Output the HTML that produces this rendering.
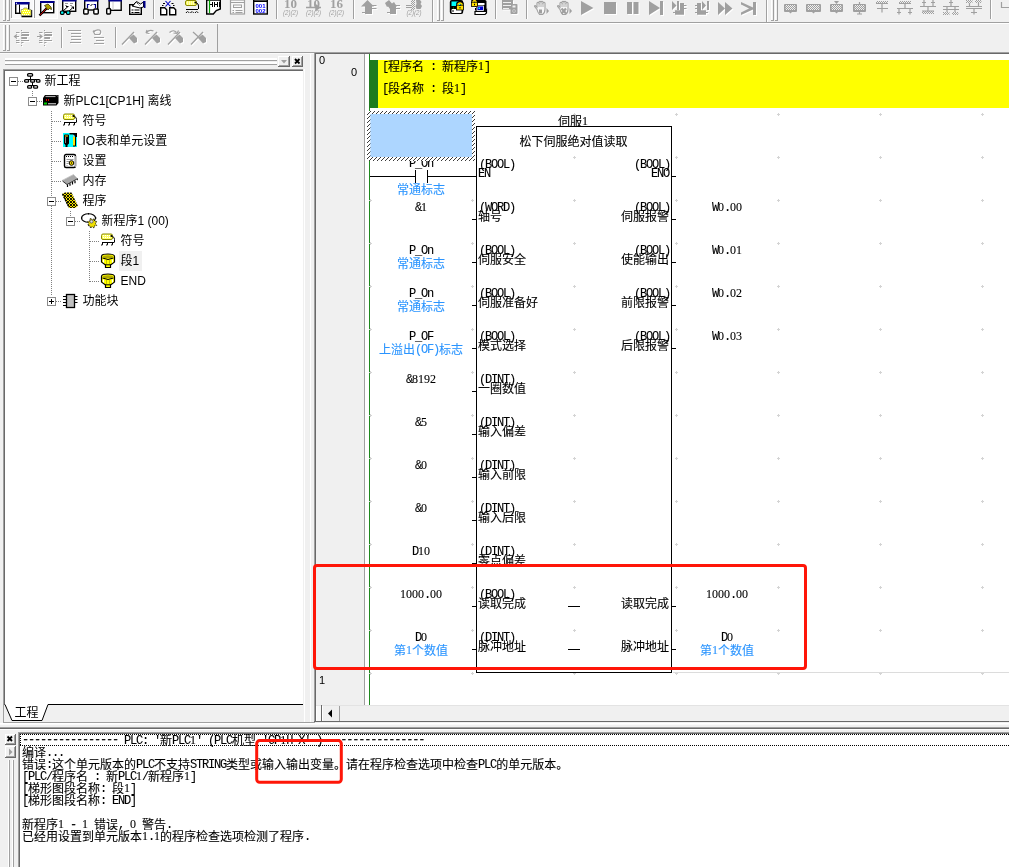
<!DOCTYPE html>
<html lang="zh-CN"><head><meta charset="utf-8"><title>CX-Programmer</title>
<style>
html,body{margin:0;padding:0}
body{width:1009px;height:867px;background:#f0f0f0;position:relative;overflow:hidden;
 font-family:"Liberation Sans","Noto Sans CJK SC",sans-serif;font-size:12px;color:#000}
.a{position:absolute;white-space:pre}
.s{font-family:"Liberation Mono","Noto Sans CJK SC",monospace;font-size:12px;line-height:12px;-webkit-text-stroke:0.1px currentColor}
.s .m{letter-spacing:-1.2px}
.x .m,.x .d{position:relative;top:-1px}
.x .h{top:-2px}
.s .d{font-family:"Liberation Serif",serif;line-height:0}
.t{font-family:"Liberation Sans","Noto Sans CJK SC",sans-serif;font-size:12px;line-height:16px}
svg{position:absolute;left:0;top:0}
#app{position:absolute;left:0;top:0;width:1009px;height:867px;will-change:transform}
</style></head>
<body>
<div id="app">
<div class="a" style="left:0px;top:22px;width:1009px;height:1px;background:#a0a0a0;"></div>
<div class="a" style="left:0px;top:23px;width:1009px;height:1px;background:#ffffff;"></div>
<div class="a" style="left:0px;top:52px;width:1009px;height:1px;background:#a0a0a0;"></div>
<div class="a" style="left:3px;top:0px;width:1px;height:20px;background:#ffffff;"></div>
<div class="a" style="left:4px;top:0px;width:1px;height:20px;background:#f0f0f0;"></div>
<div class="a" style="left:5px;top:0px;width:1px;height:20px;background:#a0a0a0;"></div>
<div class="a" style="left:3px;top:20px;width:3px;height:1px;background:#a0a0a0;"></div>
<div class="a" style="left:7px;top:0px;width:1px;height:20px;background:#ffffff;"></div>
<div class="a" style="left:8px;top:0px;width:1px;height:20px;background:#f0f0f0;"></div>
<div class="a" style="left:9px;top:0px;width:1px;height:20px;background:#a0a0a0;"></div>
<div class="a" style="left:7px;top:20px;width:3px;height:1px;background:#a0a0a0;"></div>
<div class="a" style="left:3px;top:25px;width:1px;height:25px;background:#ffffff;"></div>
<div class="a" style="left:4px;top:25px;width:1px;height:25px;background:#f0f0f0;"></div>
<div class="a" style="left:5px;top:25px;width:1px;height:25px;background:#a0a0a0;"></div>
<div class="a" style="left:3px;top:50px;width:3px;height:1px;background:#a0a0a0;"></div>
<div class="a" style="left:7px;top:25px;width:1px;height:25px;background:#ffffff;"></div>
<div class="a" style="left:8px;top:25px;width:1px;height:25px;background:#f0f0f0;"></div>
<div class="a" style="left:9px;top:25px;width:1px;height:25px;background:#a0a0a0;"></div>
<div class="a" style="left:7px;top:50px;width:3px;height:1px;background:#a0a0a0;"></div>
<div class="a" style="left:437px;top:0px;width:1px;height:20px;background:#ffffff;"></div>
<div class="a" style="left:438px;top:0px;width:1px;height:20px;background:#f0f0f0;"></div>
<div class="a" style="left:439px;top:0px;width:1px;height:20px;background:#a0a0a0;"></div>
<div class="a" style="left:437px;top:20px;width:3px;height:1px;background:#a0a0a0;"></div>
<div class="a" style="left:441px;top:0px;width:1px;height:20px;background:#ffffff;"></div>
<div class="a" style="left:442px;top:0px;width:1px;height:20px;background:#f0f0f0;"></div>
<div class="a" style="left:443px;top:0px;width:1px;height:20px;background:#a0a0a0;"></div>
<div class="a" style="left:441px;top:20px;width:3px;height:1px;background:#a0a0a0;"></div>
<div class="a" style="left:771px;top:0px;width:1px;height:20px;background:#ffffff;"></div>
<div class="a" style="left:772px;top:0px;width:1px;height:20px;background:#f0f0f0;"></div>
<div class="a" style="left:773px;top:0px;width:1px;height:20px;background:#a0a0a0;"></div>
<div class="a" style="left:771px;top:20px;width:3px;height:1px;background:#a0a0a0;"></div>
<div class="a" style="left:775px;top:0px;width:1px;height:20px;background:#ffffff;"></div>
<div class="a" style="left:776px;top:0px;width:1px;height:20px;background:#f0f0f0;"></div>
<div class="a" style="left:777px;top:0px;width:1px;height:20px;background:#a0a0a0;"></div>
<div class="a" style="left:775px;top:20px;width:3px;height:1px;background:#a0a0a0;"></div>
<div class="a" style="left:153px;top:0px;width:1px;height:19px;background:#a0a0a0;"></div>
<div class="a" style="left:154px;top:0px;width:1px;height:19px;background:#ffffff;"></div>
<div class="a" style="left:276px;top:0px;width:1px;height:19px;background:#a0a0a0;"></div>
<div class="a" style="left:277px;top:0px;width:1px;height:19px;background:#ffffff;"></div>
<div class="a" style="left:353px;top:0px;width:1px;height:19px;background:#a0a0a0;"></div>
<div class="a" style="left:354px;top:0px;width:1px;height:19px;background:#ffffff;"></div>
<div class="a" style="left:495px;top:0px;width:1px;height:19px;background:#a0a0a0;"></div>
<div class="a" style="left:496px;top:0px;width:1px;height:19px;background:#ffffff;"></div>
<div class="a" style="left:526px;top:0px;width:1px;height:19px;background:#a0a0a0;"></div>
<div class="a" style="left:527px;top:0px;width:1px;height:19px;background:#ffffff;"></div>
<div class="a" style="left:990px;top:0px;width:1px;height:19px;background:#a0a0a0;"></div>
<div class="a" style="left:991px;top:0px;width:1px;height:19px;background:#ffffff;"></div>
<div class="a" style="left:432px;top:0px;width:1px;height:22px;background:#a0a0a0;"></div>
<div class="a" style="left:433px;top:0px;width:1px;height:22px;background:#ffffff;"></div>
<div class="a" style="left:766px;top:0px;width:1px;height:22px;background:#a0a0a0;"></div>
<div class="a" style="left:767px;top:0px;width:1px;height:22px;background:#ffffff;"></div>
<div class="a" style="left:61px;top:27px;width:1px;height:21px;background:#a0a0a0;"></div>
<div class="a" style="left:62px;top:27px;width:1px;height:21px;background:#ffffff;"></div>
<div class="a" style="left:115px;top:27px;width:1px;height:21px;background:#a0a0a0;"></div>
<div class="a" style="left:116px;top:27px;width:1px;height:21px;background:#ffffff;"></div>
<div class="a" style="left:217px;top:24px;width:1px;height:28px;background:#a0a0a0;"></div>
<div class="a" style="left:12px;top:0px;width:21px;height:18px;background:#f9f9f9;"></div>
<div class="a" style="left:35px;top:0px;width:22px;height:18px;background:#f9f9f9;"></div>
<div class="a" style="left:11px;top:0px;width:1px;height:18px;background:#a0a0a0;"></div>
<div class="a" style="left:34px;top:0px;width:1px;height:18px;background:#a0a0a0;"></div>
<div class="a" style="left:33px;top:0px;width:1px;height:18px;background:#ffffff;"></div>
<div class="a" style="left:57px;top:0px;width:1px;height:18px;background:#ffffff;"></div>
<div class="a" style="left:11px;top:18px;width:47px;height:1px;background:#ffffff;"></div>
<div class="a" style="left:0px;top:53px;width:314px;height:1px;background:#fafafa;"></div>
<div class="a" style="left:5px;top:58px;width:272px;height:1px;background:#ffffff;"></div>
<div class="a" style="left:5px;top:59px;width:272px;height:1px;background:#ffffff;"></div>
<div class="a" style="left:5px;top:60px;width:272px;height:1px;background:#a0a0a0;"></div>
<div class="a" style="left:5px;top:62px;width:272px;height:1px;background:#ffffff;"></div>
<div class="a" style="left:5px;top:63px;width:272px;height:1px;background:#ffffff;"></div>
<div class="a" style="left:5px;top:64px;width:272px;height:1px;background:#a0a0a0;"></div>
<div class="a" style="left:278px;top:56px;width:12px;height:11px;background:#f0f0f0;"></div>
<div class="a" style="left:278px;top:56px;width:12px;height:1px;background:#ffffff;"></div>
<div class="a" style="left:278px;top:56px;width:1px;height:11px;background:#ffffff;"></div>
<div class="a" style="left:278px;top:66px;width:12px;height:1px;background:#696969;"></div>
<div class="a" style="left:289px;top:56px;width:1px;height:11px;background:#696969;"></div>
<div class="a" style="left:279px;top:65px;width:10px;height:1px;background:#a0a0a0;"></div>
<div class="a" style="left:288px;top:57px;width:1px;height:9px;background:#a0a0a0;"></div>
<div class="a" style="left:292px;top:56px;width:11px;height:11px;background:#f0f0f0;"></div>
<div class="a" style="left:292px;top:56px;width:11px;height:1px;background:#ffffff;"></div>
<div class="a" style="left:292px;top:56px;width:1px;height:11px;background:#ffffff;"></div>
<div class="a" style="left:292px;top:66px;width:11px;height:1px;background:#696969;"></div>
<div class="a" style="left:302px;top:56px;width:1px;height:11px;background:#696969;"></div>
<div class="a" style="left:293px;top:65px;width:9px;height:1px;background:#a0a0a0;"></div>
<div class="a" style="left:301px;top:57px;width:1px;height:9px;background:#a0a0a0;"></div>
<div class="a" style="left:4px;top:69px;width:299px;height:636px;background:#ffffff;"></div>
<div class="a" style="left:3px;top:69px;width:300px;height:1px;background:#a0a0a0;"></div>
<div class="a" style="left:4px;top:70px;width:299px;height:1px;background:#696969;"></div>
<div class="a" style="left:3px;top:69px;width:1px;height:653px;background:#a0a0a0;"></div>
<div class="a" style="left:4px;top:70px;width:1px;height:635px;background:#696969;"></div>
<div class="a" style="left:304px;top:69px;width:1px;height:653px;background:#ffffff;"></div>
<div class="a" style="left:310px;top:54px;width:1px;height:668px;background:#ffffff;"></div>
<div class="a" style="left:5px;top:705px;width:298px;height:17px;background:#f0f0f0;"></div>
<div class="a" style="left:316px;top:54px;width:693px;height:651px;background:#ffffff;"></div>
<div class="a" style="left:315px;top:53px;width:694px;height:1px;background:#696969;"></div>
<div class="a" style="left:314px;top:53px;width:1px;height:669px;background:#a0a0a0;"></div>
<div class="a" style="left:315px;top:54px;width:1px;height:667px;background:#696969;"></div>
<div class="a" style="left:316px;top:54px;width:48px;height:651px;background:#f0f0f0;"></div>
<div class="a" style="left:364px;top:54px;width:1px;height:651px;background:#a0a0a0;"></div>
<div class="a" style="left:369px;top:54px;width:1px;height:651px;background:#1e8a1e;"></div>
<div class="a" style="left:316px;top:705px;width:693px;height:16px;background:#f0f0f0;"></div>
<div class="a" style="left:316px;top:705px;width:693px;height:1px;background:#e3e3e3;"></div>
<div class="a" style="left:314px;top:721px;width:695px;height:1px;background:#696969;"></div>
<div class="a" style="left:0px;top:722px;width:1009px;height:1px;background:#f0f0f0;"></div>
<div class="a" style="left:3px;top:722px;width:312px;height:1px;background:#a0a0a0;"></div>
<div class="a" style="left:0px;top:723px;width:1009px;height:1px;background:#ffffff;"></div>
<div class="a" style="left:0px;top:724px;width:1009px;height:1px;background:#fafafa;"></div>
<div class="a" style="left:0px;top:727px;width:1009px;height:1px;background:#a0a0a0;"></div>
<div class="a" style="left:0px;top:728px;width:1009px;height:1px;background:#696969;"></div>
<div class="a" style="left:0px;top:729px;width:1009px;height:1px;background:#ffffff;"></div>
<div class="a" style="left:119px;top:251px;width:23px;height:20px;background:#f0f0f0;"></div>
<div class="a t" style="top:73px;left:44.5px;">新工程</div>
<div class="a t" style="top:93px;left:63.5px;">新PLC1[CP1H] 离线</div>
<div class="a t" style="top:113px;left:82.5px;">符号</div>
<div class="a t" style="top:133px;left:82.5px;">IO表和单元设置</div>
<div class="a t" style="top:153px;left:82.5px;">设置</div>
<div class="a t" style="top:173px;left:82.5px;">内存</div>
<div class="a t" style="top:193px;left:82.5px;">程序</div>
<div class="a t" style="top:213px;left:101.5px;">新程序1 (00)</div>
<div class="a t" style="top:233px;left:120.5px;">符号</div>
<div class="a t" style="top:253px;left:120.5px;">段1</div>
<div class="a t" style="top:273px;left:120.5px;">END</div>
<div class="a t" style="top:293px;left:82.5px;">功能块</div>
<svg width="320" height="20" style="left:0;top:703px"><path d="M5 1.500l7 16h30l6-16z" fill="#fff"/></svg>
<div class="a t" style="top:705px;left:14.5px;">工程</div>
<svg width="639" height="563" style="left:369px;top:113px"><defs><pattern id="gd" width="102" height="43" patternUnits="userSpaceOnUse"><path d="M0 1.5h3M1.5 0v3" stroke="#d4d4d4" stroke-width="1" fill="none"/></pattern></defs><rect width="639" height="563" fill="url(#gd)"/></svg>
<div class="a t" style="top:52px;left:319px;font-size:11px;">0</div>
<div class="a t" style="top:64px;left:351px;font-size:11px;">0</div>
<div class="a t" style="top:672px;left:319px;font-size:11px;">1</div>
<div class="a" style="left:369px;top:60px;width:9px;height:48px;background:#1e7b1e;"></div>
<div class="a" style="left:378px;top:60px;width:631px;height:48px;background:#ffff00;"></div>
<div class="a s x" style="top:62px;left:382px;"><span class="m">[</span>程序名<span class="m"> : </span>新程序<span class="d">1</span><span class="m">]</span></div>
<div class="a s x" style="top:84px;left:382px;"><span class="m">[</span>段名称<span class="m"> : </span>段<span class="d">1</span><span class="m">]</span></div>
<div class="a" style="left:673px;top:672px;width:336px;height:1px;background:#dcdcdc;"></div>
<div class="a" style="left:476px;top:126px;width:196px;height:547px;background:transparent;box-sizing:border-box;border:1px solid #000;"></div>
<div class="a s x" style="top:117px;left:373px;width:400px;text-align:center;">伺服<span class="d">1</span></div>
<div class="a s" style="top:137px;left:373.5px;width:400px;text-align:center;">松下伺服绝对值读取</div>
<div class="a s" style="top:158px;left:221px;width:400px;text-align:center;"><span class="m">P_On</span></div>
<div class="a s" style="top:185px;left:221px;width:400px;text-align:center;color:#2b95ff;">常通标志</div>
<div class="a s" style="top:159px;left:479px;"><span class="m">(BOOL)</span></div>
<div class="a s" style="top:168px;left:478px;"><span class="m">EN</span></div>
<div class="a" style="left:472px;top:176px;width:4px;height:1px;background:#000;"></div>
<div class="a s" style="top:159px;left:270px;width:400px;text-align:right;"><span class="m">(BOOL)</span></div>
<div class="a s" style="top:168px;left:269px;width:400px;text-align:right;"><span class="m">ENO</span></div>
<div class="a" style="left:672px;top:176px;width:4px;height:1px;background:#000;"></div>
<div class="a s" style="top:202px;left:221px;width:400px;text-align:center;"><span class="m">&amp;</span><span class="d">1</span></div>
<div class="a s" style="top:202px;left:479px;"><span class="m">(WORD)</span></div>
<div class="a s" style="top:212px;left:478px;">轴号</div>
<div class="a" style="left:472px;top:219px;width:4px;height:1px;background:#000;"></div>
<div class="a s" style="top:202px;left:270px;width:400px;text-align:right;"><span class="m">(BOOL)</span></div>
<div class="a s" style="top:212px;left:269px;width:400px;text-align:right;">伺服报警</div>
<div class="a" style="left:672px;top:219px;width:4px;height:1px;background:#000;"></div>
<div class="a s" style="top:202px;left:527px;width:400px;text-align:center;"><span class="m">W</span><span class="d">0</span><span class="m">.</span><span class="d">00</span></div>
<div class="a s" style="top:245px;left:221px;width:400px;text-align:center;"><span class="m">P_On</span></div>
<div class="a s" style="top:259px;left:221px;width:400px;text-align:center;color:#2b95ff;">常通标志</div>
<div class="a s" style="top:245px;left:479px;"><span class="m">(BOOL)</span></div>
<div class="a s" style="top:255px;left:478px;">伺服安全</div>
<div class="a" style="left:472px;top:262px;width:4px;height:1px;background:#000;"></div>
<div class="a s" style="top:245px;left:270px;width:400px;text-align:right;"><span class="m">(BOOL)</span></div>
<div class="a s" style="top:255px;left:269px;width:400px;text-align:right;">使能输出</div>
<div class="a" style="left:672px;top:262px;width:4px;height:1px;background:#000;"></div>
<div class="a s" style="top:245px;left:527px;width:400px;text-align:center;"><span class="m">W</span><span class="d">0</span><span class="m">.</span><span class="d">01</span></div>
<div class="a s" style="top:288px;left:221px;width:400px;text-align:center;"><span class="m">P_On</span></div>
<div class="a s" style="top:302px;left:221px;width:400px;text-align:center;color:#2b95ff;">常通标志</div>
<div class="a s" style="top:288px;left:479px;"><span class="m">(BOOL)</span></div>
<div class="a s" style="top:298px;left:478px;">伺服准备好</div>
<div class="a" style="left:472px;top:305px;width:4px;height:1px;background:#000;"></div>
<div class="a s" style="top:288px;left:270px;width:400px;text-align:right;"><span class="m">(BOOL)</span></div>
<div class="a s" style="top:298px;left:269px;width:400px;text-align:right;">前限报警</div>
<div class="a" style="left:672px;top:305px;width:4px;height:1px;background:#000;"></div>
<div class="a s" style="top:288px;left:527px;width:400px;text-align:center;"><span class="m">W</span><span class="d">0</span><span class="m">.</span><span class="d">02</span></div>
<div class="a s" style="top:331px;left:221px;width:400px;text-align:center;"><span class="m">P_OF</span></div>
<div class="a s x" style="top:345px;left:221px;width:400px;text-align:center;color:#2b95ff;">上溢出<span class="m">(OF)</span>标志</div>
<div class="a s" style="top:331px;left:479px;"><span class="m">(BOOL)</span></div>
<div class="a s" style="top:341px;left:478px;">模式选择</div>
<div class="a" style="left:472px;top:348px;width:4px;height:1px;background:#000;"></div>
<div class="a s" style="top:331px;left:270px;width:400px;text-align:right;"><span class="m">(BOOL)</span></div>
<div class="a s" style="top:341px;left:269px;width:400px;text-align:right;">后限报警</div>
<div class="a" style="left:672px;top:348px;width:4px;height:1px;background:#000;"></div>
<div class="a s" style="top:331px;left:527px;width:400px;text-align:center;"><span class="m">W</span><span class="d">0</span><span class="m">.</span><span class="d">03</span></div>
<div class="a s" style="top:374px;left:221px;width:400px;text-align:center;"><span class="m">&amp;</span><span class="d">8192</span></div>
<div class="a s" style="top:374px;left:479px;"><span class="m">(DINT)</span></div>
<div class="a s" style="top:384px;left:478px;">一圈数值</div>
<div class="a" style="left:472px;top:391px;width:4px;height:1px;background:#000;"></div>
<div class="a s" style="top:417px;left:221px;width:400px;text-align:center;"><span class="m">&amp;</span><span class="d">5</span></div>
<div class="a s" style="top:417px;left:479px;"><span class="m">(DINT)</span></div>
<div class="a s" style="top:427px;left:478px;">输入偏差</div>
<div class="a" style="left:472px;top:434px;width:4px;height:1px;background:#000;"></div>
<div class="a s" style="top:460px;left:221px;width:400px;text-align:center;"><span class="m">&amp;</span><span class="d">0</span></div>
<div class="a s" style="top:460px;left:479px;"><span class="m">(DINT)</span></div>
<div class="a s" style="top:470px;left:478px;">输入前限</div>
<div class="a" style="left:472px;top:477px;width:4px;height:1px;background:#000;"></div>
<div class="a s" style="top:503px;left:221px;width:400px;text-align:center;"><span class="m">&amp;</span><span class="d">0</span></div>
<div class="a s" style="top:503px;left:479px;"><span class="m">(DINT)</span></div>
<div class="a s" style="top:513px;left:478px;">输入后限</div>
<div class="a" style="left:472px;top:520px;width:4px;height:1px;background:#000;"></div>
<div class="a s" style="top:546px;left:221px;width:400px;text-align:center;"><span class="m">D</span><span class="d">10</span></div>
<div class="a s" style="top:546px;left:479px;"><span class="m">(DINT)</span></div>
<div class="a s" style="top:556px;left:478px;">零点偏差</div>
<div class="a" style="left:472px;top:563px;width:4px;height:1px;background:#000;"></div>
<div class="a s" style="top:589px;left:221px;width:400px;text-align:center;"><span class="d">1000</span><span class="m">.</span><span class="d">00</span></div>
<div class="a s" style="top:589px;left:479px;"><span class="m">(BOOL)</span></div>
<div class="a s" style="top:599px;left:478px;">读取完成</div>
<div class="a" style="left:472px;top:606px;width:4px;height:1px;background:#000;"></div>
<div class="a s" style="top:599px;left:269px;width:400px;text-align:right;">读取完成</div>
<div class="a" style="left:672px;top:606px;width:4px;height:1px;background:#000;"></div>
<div class="a s" style="top:589px;left:527px;width:400px;text-align:center;"><span class="d">1000</span><span class="m">.</span><span class="d">00</span></div>
<div class="a" style="left:568px;top:606px;width:12px;height:1px;background:#000;"></div>
<div class="a s" style="top:632px;left:221px;width:400px;text-align:center;"><span class="m">D</span><span class="d">0</span></div>
<div class="a s x" style="top:646px;left:221px;width:400px;text-align:center;color:#2b95ff;">第<span class="d">1</span>个数值</div>
<div class="a s" style="top:632px;left:479px;"><span class="m">(DINT)</span></div>
<div class="a s" style="top:642px;left:478px;">脉冲地址</div>
<div class="a" style="left:472px;top:649px;width:4px;height:1px;background:#000;"></div>
<div class="a s" style="top:642px;left:269px;width:400px;text-align:right;">脉冲地址</div>
<div class="a" style="left:672px;top:649px;width:4px;height:1px;background:#000;"></div>
<div class="a s" style="top:632px;left:527px;width:400px;text-align:center;"><span class="m">D</span><span class="d">0</span></div>
<div class="a s x" style="top:646px;left:527px;width:400px;text-align:center;color:#2b95ff;">第<span class="d">1</span>个数值</div>
<div class="a" style="left:568px;top:649px;width:12px;height:1px;background:#000;"></div>
<div class="a" style="left:370px;top:176px;width:45px;height:1px;background:#000;"></div>
<div class="a" style="left:428px;top:176px;width:48px;height:1px;background:#000;"></div>
<div class="a" style="left:415px;top:170px;width:1px;height:13px;background:#000;"></div>
<div class="a" style="left:427px;top:170px;width:1px;height:13px;background:#000;"></div>
<svg width="108" height="50" style="left:367px;top:111px"><defs><pattern id="ht" width="4" height="4" patternUnits="userSpaceOnUse"><path d="M-1 5l6-6M-1 1l2-2M3 5l2-2" stroke="#222" stroke-width="0.9" fill="none"/></pattern></defs><rect width="109" height="50" fill="#fff"/><rect width="109" height="50" fill="url(#ht)"/><rect x="3.400" y="3" width="101.600" height="43" fill="#add6ff"/></svg>
<div class="a" style="left:316px;top:706px;width:1px;height:15px;background:#fff;"></div>
<div class="a" style="left:317px;top:706px;width:4px;height:15px;background:#f8f8f8;"></div>
<div class="a" style="left:321px;top:705px;width:1px;height:16px;background:#696969;"></div>
<div class="a" style="left:322px;top:706px;width:1px;height:15px;background:#fff;"></div>
<div class="a" style="left:339px;top:706px;width:1px;height:15px;background:#a0a0a0;"></div>
<div class="a" style="left:20px;top:734px;width:989px;height:133px;background:#ffffff;"></div>
<div class="a" style="left:18px;top:732px;width:991px;height:1px;background:#a0a0a0;"></div>
<div class="a" style="left:19px;top:733px;width:990px;height:1px;background:#696969;"></div>
<div class="a" style="left:18px;top:732px;width:1px;height:135px;background:#a0a0a0;"></div>
<div class="a" style="left:19px;top:733px;width:1px;height:134px;background:#696969;"></div>
<div class="a" style="left:5px;top:734px;width:11px;height:11px;background:#f0f0f0;"></div>
<div class="a" style="left:5px;top:734px;width:11px;height:1px;background:#ffffff;"></div>
<div class="a" style="left:5px;top:734px;width:1px;height:11px;background:#ffffff;"></div>
<div class="a" style="left:5px;top:744px;width:11px;height:1px;background:#696969;"></div>
<div class="a" style="left:15px;top:734px;width:1px;height:11px;background:#696969;"></div>
<div class="a" style="left:6px;top:743px;width:9px;height:1px;background:#a0a0a0;"></div>
<div class="a" style="left:14px;top:735px;width:1px;height:9px;background:#a0a0a0;"></div>
<div class="a" style="left:5px;top:746px;width:11px;height:12px;background:#f0f0f0;"></div>
<div class="a" style="left:5px;top:746px;width:11px;height:1px;background:#ffffff;"></div>
<div class="a" style="left:5px;top:746px;width:1px;height:12px;background:#ffffff;"></div>
<div class="a" style="left:5px;top:757px;width:11px;height:1px;background:#696969;"></div>
<div class="a" style="left:15px;top:746px;width:1px;height:12px;background:#696969;"></div>
<div class="a" style="left:6px;top:756px;width:9px;height:1px;background:#a0a0a0;"></div>
<div class="a" style="left:14px;top:747px;width:1px;height:10px;background:#a0a0a0;"></div>
<div class="a" style="left:8px;top:760px;width:1px;height:107px;background:#ffffff;"></div>
<div class="a" style="left:9px;top:760px;width:1px;height:107px;background:#a0a0a0;"></div>
<div class="a" style="left:12px;top:760px;width:1px;height:107px;background:#ffffff;"></div>
<div class="a" style="left:13px;top:760px;width:1px;height:107px;background:#a0a0a0;"></div>
<div class="a s x" style="top:736px;left:22px;"><span class="m h">----------------</span><span class="m"> PLC: &#x27;</span>新<span class="m">PLC</span><span class="d">1</span><span class="m">&#x27; (PLC</span>机型<span class="m"> &#x27;CP</span><span class="d">1</span><span class="m">H-X&#x27; ) </span><span class="m h">----------------</span></div>
<div class="a s x" style="top:748px;left:22px;">编译<span class="m">...</span></div>
<div class="a s x" style="top:760px;left:22px;">错误<span class="m">:</span>这个单元版本的<span class="m">PLC</span>不支持<span class="m">STRING</span>类型或输入输出变量。请在程序检查选项中检查<span class="m">PLC</span>的单元版本。</div>
<div class="a s x" style="top:772px;left:22px;"><span class="m">[PLC/</span>程序名<span class="m"> : </span>新<span class="m">PLC</span><span class="d">1</span><span class="m">/</span>新程序<span class="d">1</span><span class="m">]</span></div>
<div class="a s x" style="top:784px;left:22px;"><span class="m">[</span>梯形图段名称<span class="m">: </span>段<span class="d">1</span><span class="m">]</span></div>
<div class="a s x" style="top:796px;left:22px;"><span class="m">[</span>梯形图段名称<span class="m">: END]</span></div>
<div class="a s x" style="top:820px;left:22px;">新程序<span class="d">1</span><span class="m"> - </span><span class="d">1</span><span class="m"> </span>错误<span class="m">, </span><span class="d">0</span><span class="m"> </span>警告<span class="m">.</span></div>
<div class="a s x" style="top:832px;left:22px;">已经用设置到单元版本<span class="d">1</span><span class="m">.</span><span class="d">1</span>的程序检查选项检测了程序<span class="m">.</span></div>
<svg width="1009" height="867" viewBox="0 0 1009 867">
<g transform="translate(24,73)" fill="#fff" stroke="#000" stroke-width="1.3"><path d="M6.5 3v3M2.5 6.5h12M2.5 6.5v1M8.5 6.5v1M14.5 6.5v1M8.5 9v3M5 12.5h7M5 12.5v1M11.5 12.5v1" fill="none" stroke-width="1"/><rect x="3.6" y="0.6" width="5" height="2.6" rx="1.2"/><rect x="0.6" y="6.6" width="4" height="2.6" rx="1.2"/><rect x="6.6" y="6.6" width="4" height="2.6" rx="1.2"/><rect x="12.4" y="6.6" width="3.6" height="2.6" rx="1.2"/><rect x="3.6" y="12.6" width="4" height="2.6" rx="1.2"/><rect x="9.6" y="12.6" width="4" height="2.6" rx="1.2"/></g>
<rect x="9.5" y="77.5" width="8" height="8" fill="#fff" stroke="#8c8c8c" stroke-width="1"/>
<path d="M11 81.5h5" stroke="#000" stroke-width="1"/>
<path d="M18 81.5H23" stroke="#808080" stroke-width="1" stroke-dasharray="1 1" fill="none"/>
<g transform="translate(43,93)"><path d="M0 5l2-3h13.5v8l-2 2.5H0z" fill="#000"/><path d="M2.5 3.5h10" stroke="#a8a8a8" stroke-width="1.2"/><path d="M14 2.6l.8.8" stroke="#ddd" stroke-width="1"/><rect x="3" y="6" width="1" height="2" fill="#e00000"/><rect x="5" y="6" width="1" height="2" fill="#e00000"/><rect x="1" y="9.5" width="3" height="2" fill="#00d000"/><rect x="5" y="10" width="8" height="1.4" fill="#a8a8a8"/></g>
<rect x="28.5" y="97.5" width="8" height="8" fill="#fff" stroke="#8c8c8c" stroke-width="1"/>
<path d="M30 101.5h5" stroke="#000" stroke-width="1"/>
<path d="M37 101.5H42" stroke="#808080" stroke-width="1" stroke-dasharray="1 1" fill="none"/>
<g transform="translate(62,113)"><rect x="1.5" y="1" width="11" height="5.5" rx="1.5" fill="#ffff66" stroke="#8a8a00" stroke-width="1"/><path d="M3 2.5h8M3 4.5h8" stroke="#fff" stroke-width="1" stroke-dasharray="1 1"/><circle cx="11.5" cy="3" r="1.1" fill="#000"/><path d="M12.5 3.5q2 .5 2 3v3M2 9.5h12M2.5 9.5v2M7.5 9.5v2M12.5 9.5v2" fill="none" stroke="#000" stroke-width="1"/><path d="M1.5 12.5l1-1.5M6.5 12.5l1-1.5M11.5 12.5l1-1.5" stroke="#000" stroke-width="1.2"/></g>
<path d="M52 121.5H61" stroke="#808080" stroke-width="1" stroke-dasharray="1 1" fill="none"/>
<g transform="translate(62,133)"><rect x="1" y="0" width="14" height="14" fill="#00ffff"/><path d="M2 2.5q0-1 1-1h3q1 0 1 1v8l-1.5 1.5v2h-2v-2L2 10.5z" fill="#000"/><path d="M3 3h3" stroke="#ffe000" stroke-width="1"/><path d="M3.5 4v6" stroke="#888" stroke-width="1"/><path d="M7.5 0h7.5v4h-2V2.5h-1.5V1.500h-4z" fill="#000"/><rect x="11" y="2" width="1" height="2" fill="#bbb"/><rect x="11" y="4" width="2" height="9" fill="#ffe000"/><path d="M13.5 4v9" stroke="#000" stroke-width="1"/><path d="M11 13h2.500" stroke="#000" stroke-width="1"/></g>
<path d="M52 141.5H61" stroke="#808080" stroke-width="1" stroke-dasharray="1 1" fill="none"/>
<g transform="translate(62,153)"><rect x="2.500" y="1.500" width="11" height="13" rx="1.500" fill="#fff" stroke="#000" stroke-width="1.400"/><path d="M4 3.500h8" stroke="#000" stroke-width="1" stroke-dasharray="1 1"/><path d="M4.500 6.500h7M4.500 8.500h2.500M4.500 10.500h2M4.500 12.500h1" stroke="#999" stroke-width="1"/><path d="M13.500 3v11" stroke="#aaa" stroke-width="1"/><circle cx="9.500" cy="10" r="2.300" fill="#ffe000" stroke="#000" stroke-width="1"/><circle cx="9.500" cy="10" r=".7" fill="#000"/></g>
<path d="M52 161.5H61" stroke="#808080" stroke-width="1" stroke-dasharray="1 1" fill="none"/>
<g transform="translate(62,173)"><path d="M0 7.500L11.500 1.500 15.500 5.500 5 11.500z" fill="#a8a8a8"/><path d="M0 7.500L11.500 1.500 15.500 5.500" fill="none" stroke="#c8c8c8" stroke-width=".8"/><path d="M0.500 8l4.500 3.500L15.500 5.700v1.500" fill="none" stroke="#333" stroke-width="1"/><path d="M5.500 11.500v2.500M8 10.300v2.500M10.500 9v2.500M13 7.700v2.500" stroke="#000" stroke-width="1.200"/></g>
<path d="M52 181.5H61" stroke="#808080" stroke-width="1" stroke-dasharray="1 1" fill="none"/>
<g transform="translate(62,193)"><defs><pattern id="pp" width="3" height="3" patternUnits="userSpaceOnUse"><rect width="3" height="3" fill="#f0e000"/><path d="M0 0l3 3M3 0l-3 3" stroke="#000" stroke-width=".9"/></pattern></defs><path d="M0 1l3-1.500h6.500L16 13l-3 2H7z" fill="url(#pp)"/><path d="M0.500 1L7 14.500" stroke="#000" stroke-width="1.200" stroke-dasharray="2 1"/></g>
<rect x="47.5" y="197.5" width="8" height="8" fill="#fff" stroke="#8c8c8c" stroke-width="1"/>
<path d="M49 201.5h5" stroke="#000" stroke-width="1"/>
<path d="M56 201.5H61" stroke="#808080" stroke-width="1" stroke-dasharray="1 1" fill="none"/>
<g transform="translate(81,213)"><ellipse cx="7.500" cy="5" rx="7" ry="4.300" fill="#fff" stroke="#000" stroke-width="1.100"/><path d="M7.500 0v1.500M0 5h1.500M14 5h1.500" stroke="#000" stroke-width="1"/><path d="M10 5.500l1.200 1.500 2-1.300.3 2.300 2.200.500-1.200 2 1.200 2-2.200.300-.5 2.200-1.800-1.300-1.700 1.300-.6-2.200-2.200-.3 1.100-2-1.100-2 2.200-.5.300-2.300z" fill="#f0e000" stroke="#000" stroke-width=".9" stroke-dasharray="1.500 1"/><circle cx="10.500" cy="8.500" r="1.600" fill="#ddd" stroke="#555" stroke-width=".8"/></g>
<rect x="66.5" y="217.5" width="8" height="8" fill="#fff" stroke="#8c8c8c" stroke-width="1"/>
<path d="M68 221.5h5" stroke="#000" stroke-width="1"/>
<path d="M75 221.5H80" stroke="#808080" stroke-width="1" stroke-dasharray="1 1" fill="none"/>
<g transform="translate(100,233)"><rect x="1.5" y="1" width="11" height="5.5" rx="1.5" fill="#ffff66" stroke="#8a8a00" stroke-width="1"/><path d="M3 2.5h8M3 4.5h8" stroke="#fff" stroke-width="1" stroke-dasharray="1 1"/><circle cx="11.5" cy="3" r="1.1" fill="#000"/><path d="M12.5 3.5q2 .5 2 3v3M2 9.5h12M2.5 9.5v2M7.5 9.5v2M12.5 9.5v2" fill="none" stroke="#000" stroke-width="1"/><path d="M1.5 12.5l1-1.5M6.5 12.5l1-1.5M11.5 12.5l1-1.5" stroke="#000" stroke-width="1.2"/></g>
<path d="M90 241.5H99" stroke="#808080" stroke-width="1" stroke-dasharray="1 1" fill="none"/>
<g transform="translate(100,253)"><path d="M1.500 3.500q0-2.500 6.500-2.500t6.500 2.500v5.500l-4 3v2.500h-5v-2.500l-4-3z" fill="#ffff00" stroke="#000" stroke-width="1.200"/><ellipse cx="8" cy="3.800" rx="5" ry="1.500" fill="#b0a800"/><path d="M2.500 5q5.500 3 11 0" fill="none" stroke="#000" stroke-width="1"/><path d="M3.500 6.500v3M12.500 6.500v3" stroke="#fff" stroke-width="1.200"/><path d="M6.500 7.500v3M9.500 7.500v3" stroke="#8a8a00" stroke-width="1" stroke-dasharray="1 1"/><path d="M5 11.800h6" stroke="#000" stroke-width="1"/></g>
<path d="M90 261.5H99" stroke="#808080" stroke-width="1" stroke-dasharray="1 1" fill="none"/>
<g transform="translate(100,273)"><path d="M1.500 3.500q0-2.500 6.500-2.500t6.500 2.500v5.500l-4 3v2.500h-5v-2.500l-4-3z" fill="#ffff00" stroke="#000" stroke-width="1.200"/><ellipse cx="8" cy="3.800" rx="5" ry="1.500" fill="#b0a800"/><path d="M2.500 5q5.500 3 11 0" fill="none" stroke="#000" stroke-width="1"/><path d="M3.500 6.500v3M12.500 6.500v3" stroke="#fff" stroke-width="1.200"/><path d="M6.500 7.500v3M9.500 7.500v3" stroke="#8a8a00" stroke-width="1" stroke-dasharray="1 1"/><path d="M5 11.800h6" stroke="#000" stroke-width="1"/></g>
<path d="M90 281.5H99" stroke="#808080" stroke-width="1" stroke-dasharray="1 1" fill="none"/>
<g transform="translate(62,293)"><rect x="4.500" y="1.500" width="8" height="13" fill="#c0c0c0" stroke="#000" stroke-width="1.300"/><path d="M1 3.500h3.500M1 6.500h3.500M1 9.500h3.500M1 12.500h3.500M12.500 3.500h3M12.500 6.500h3M12.500 9.500h3" stroke="#000" stroke-width="1.200"/></g>
<rect x="47.5" y="297.5" width="8" height="8" fill="#fff" stroke="#8c8c8c" stroke-width="1"/>
<path d="M49 301.5h5" stroke="#000" stroke-width="1"/>
<path d="M51.5 299v5" stroke="#000" stroke-width="1"/>
<path d="M56 301.5H61" stroke="#808080" stroke-width="1" stroke-dasharray="1 1" fill="none"/>
<path d="M32.5 91V96" stroke="#808080" stroke-width="1" stroke-dasharray="1 1" fill="none"/>
<path d="M51.5 111V196" stroke="#808080" stroke-width="1" stroke-dasharray="1 1" fill="none"/>
<path d="M51.5 206V296" stroke="#808080" stroke-width="1" stroke-dasharray="1 1" fill="none"/>
<path d="M70.5 211V216" stroke="#808080" stroke-width="1" stroke-dasharray="1 1" fill="none"/>
<path d="M89.5 231V282" stroke="#808080" stroke-width="1" stroke-dasharray="1 1" fill="none"/>
<path d="M5 704.500l7 16h30l6-16H303" fill="none" stroke="#000" stroke-width="1"/>
<path d="M281 60h6l-3 3.500z" fill="#a0a0a0"/>
<path d="M295 59l4.500 4.500M299.500 59l-4.500 4.500" stroke="#000" stroke-width="1.800" fill="none"/>
<path d="M328 713.5l4-4v8z" fill="#000"/>
<rect x="314.500" y="565.500" width="491" height="103" rx="2.500" fill="none" stroke="#ff1608" stroke-width="3"/>
<path d="M7.500 736.500l4.500 4.500M12 736.500l-4.500 4.500" stroke="#000" stroke-width="1.800" fill="none"/>
<path d="M9 748.500l3.500 3.500-3.500 3.500z" fill="#a0a0a0"/>
<path d="M20 734.500H1009M20 745.500H1009M20.500 734V746" fill="none" stroke="#000" stroke-width="1" stroke-dasharray="1 1"/>
<rect x="256.700" y="740.600" width="84.600" height="41.600" rx="3" fill="none" stroke="#ff1608" stroke-width="3"/>
<defs><pattern id="dg" width="2" height="2" patternUnits="userSpaceOnUse"><rect width="2" height="2" fill="#f0f0f0"/><rect width="1" height="1" fill="#a0a0a0"/><rect x="1" y="1" width="1" height="1" fill="#a0a0a0"/></pattern></defs>
<g transform="translate(15,2)"><rect x=".7" y=".7" width="13" height="10.600" fill="#fff" stroke="#000" stroke-width="1.400"/><rect x="0" y="0" width="14.400" height="2.500" fill="#00008b"/><rect x="1" y=".8" width="1" height="1" fill="#fff"/><path d="M4.500 2.500v9" stroke="#000" stroke-width="1"/><path d="M6.500 14.500h10v-6.500" fill="none" stroke="#000" stroke-width="1.400"/><path d="M6 7.500h2l1-1.500h3l1 1.500h3v6h-10z" fill="#ffff20" stroke="#888" stroke-width=".7"/><path d="M7 8.500h8M8 10.500h7M7 12.500h8" stroke="#fff" stroke-width="1" stroke-dasharray="1 1"/></g>
<g transform="translate(40,1)"><rect x=".7" y=".7" width="13" height="11" fill="#fff" stroke="#000" stroke-width="1.400"/><rect x="0" y="0" width="14.400" height="2" fill="#00008b"/><path d="M-.5 14.500L7 7" stroke="#000" stroke-width="2.400"/><path d="M0 14L7 7" stroke="#c00000" stroke-width="1"/><path d="M4.500 4.500l3.500-1.500 3 3 .5 2.500-2-1-1.500 1.500z" fill="#b0a000" stroke="#403800" stroke-width=".8"/></g>
<g transform="translate(61,0)"><rect x="1.700" y="0" width="13" height="11.300" fill="#fff" stroke="#000" stroke-width="1.400"/><rect x="1" y="0" width="14.400" height="1.500" fill="#00008b"/><path d="M4 3.500h3M9 3.500h3M4 5.500h2M9 5.500h2" stroke="#999" stroke-width="1"/><path d="M1.500 11.500L7 6.500M7.500 11.500l5-4.500M5 6.500h2.500M10.500 7h2v2" fill="none" stroke="#000" stroke-width="1"/><rect x="-.5" y="11" width="3.500" height="3.300" rx="1" fill="#00ffff" stroke="#000" stroke-width="1.200"/><rect x="5.500" y="11" width="3.500" height="3.300" rx="1" fill="#00ffff" stroke="#000" stroke-width="1.200"/><path d="M3 12.500h2.500" stroke="#000" stroke-width="1"/></g>
<g transform="translate(83,0)"><rect x="1.700" y="0" width="13" height="10" fill="#fff" stroke="#000" stroke-width="1.400"/><rect x="1" y="0" width="14.400" height="1.500" fill="#00008b"/><path d="M4.500 8v-3.500h2M10.500 4.500h2v3.500" fill="none" stroke="#00008b" stroke-width="1.200"/><path d="M7.500 6l2-2" stroke="#000" stroke-width="1"/><rect x=".7" y="9" width="4.500" height="5" rx="1" fill="#fff" stroke="#000" stroke-width="1.400"/><rect x="10.800" y="9" width="4.500" height="5" rx="1" fill="#fff" stroke="#000" stroke-width="1.400"/></g>
<g transform="translate(106,0)"><rect x="3.200" y="0" width="12" height="10.300" fill="#fff" stroke="#000" stroke-width="1.400"/><rect x="2.500" y="0" width="13.400" height="1.500" fill="#00008b"/><path d="M7 2v8" stroke="#ccc" stroke-width="1"/><rect x=".7" y="8.500" width="3.800" height="5.500" rx="1" fill="#fff" stroke="#000" stroke-width="1.400"/><path d="M0 10.500h1M0 12.500h1" stroke="#000" stroke-width="1"/></g>
<g transform="translate(129,0)"><rect x=".7" y="4.700" width="11.600" height="9.600" fill="#fff" stroke="#000" stroke-width="1.400"/><path d="M2.500 10h2M5.500 10h5M2.500 12.500h2M5.500 12.500h5" stroke="#000" stroke-width="1.200"/><path d="M3 6l4.500-4.500 4 2.500 3-2v5l-3.500 1z" fill="#fff" stroke="#000" stroke-width="1"/><path d="M4 6l3.500-3.500 3 3" fill="none" stroke="#000" stroke-width="1" stroke-dasharray="1 1"/><path d="M14 1h2.500v7h-1.500z" fill="#00008b"/></g>
<g transform="translate(160,1)"><path d="M.7 6.700h4l2 2v5h-6z" fill="#fff" stroke="#000" stroke-width="1.400"/><path d="M9.700 6.700h4l2 2v5h-6z" fill="#fff" stroke="#000" stroke-width="1.400"/><path d="M5.500 0l5 5.500M10.500 0l-5 5.500" stroke="#0000c0" stroke-width="1.100"/><path d="M3 2.500h2M11.500 2.500h2M2 4.500h1.500M13 4.500h1.500" stroke="#000" stroke-width="1"/></g>
<g transform="translate(184,0)"><rect x="1.500" y=".5" width="11" height="5" rx="1.500" fill="#ffff66" stroke="#8a8a00" stroke-width="1"/><path d="M3 2h8M3 4h8" stroke="#fff" stroke-width="1" stroke-dasharray="1 1"/><circle cx="11.500" cy="2.500" r="1.100" fill="#000"/><path d="M12.500 3q2 .5 2 3v3M2 9.500h12" fill="none" stroke="#000" stroke-width="1"/><path d="M2 13q2-3 3 0M6.500 13q2-3 3 0M11 13q2-3 3 0" fill="none" stroke="#000" stroke-width="1" stroke-dasharray="2 1"/></g>
<g transform="translate(206,0)"><path d="M.7 0h13.600v9l-4 1.500-3 3.500h-6.600z" fill="#fff" stroke="#000" stroke-width="1.400"/><path d="M3.500 0v13" stroke="#00a000" stroke-width="1.200"/><path d="M4 4.500h2M8 4.500h3M13 4.500h1.500M6.500 2v5M8.500 2v5M11.500 2v5M13.500 2v5" stroke="#000" stroke-width="1" fill="none"/></g>
<g transform="translate(230,0)"><rect x=".5" y="0" width="14" height="14" fill="#fafafa" stroke="#a0a0a0" stroke-width="1.200"/><path d="M1 2.500h13" stroke="#a0a0a0" stroke-width="1"/><rect x="3.500" y="5" width="8" height="2.500" fill="none" stroke="#a0a0a0" stroke-width="1"/><path d="M2.500 10.500h1.500M5.500 10.500h7M2.500 12.500h1.500M5.500 12.500h7" stroke="#a0a0a0" stroke-width="1"/></g>
<g transform="translate(253,0)"><rect x=".7" y="0" width="13.600" height="14" fill="#fff" stroke="#000" stroke-width="1.400"/><path d="M1 1.500h13" stroke="#000" stroke-width="1"/><text x="2.500" y="7.800" font-family="Liberation Sans,sans-serif" font-size="6" font-weight="bold" fill="#0000ff" textLength="10" lengthAdjust="spacingAndGlyphs">001</text><text x="2.500" y="12.800" font-family="Liberation Sans,sans-serif" font-size="6" font-weight="bold" fill="#0000ff" textLength="10" lengthAdjust="spacingAndGlyphs">002</text></g>
<g transform="translate(283,0)"><text x="7.500" y="7.500" text-anchor="middle" font-family="Liberation Serif,serif" font-size="13" font-weight="bold" fill="#a0a0a0">10</text><text x="7.500" y="14.500" text-anchor="middle" font-family="Liberation Sans,sans-serif" font-size="6.500" font-style="italic" fill="#a0a0a0" textLength="15" lengthAdjust="spacingAndGlyphs">(2)(2)</text></g>
<g transform="translate(306,0)"><text x="7.500" y="7.500" text-anchor="middle" font-family="Liberation Serif,serif" font-size="13" font-weight="bold" fill="#a0a0a0">10</text><text x="7.500" y="14.500" text-anchor="middle" font-family="Liberation Sans,sans-serif" font-size="6.500" font-style="italic" fill="#a0a0a0" textLength="15" lengthAdjust="spacingAndGlyphs">(2)(2)</text><path d="M0 7.500h15M10 5l3.500 2.500-3.500 2.500z" stroke="#a0a0a0" fill="#a0a0a0" stroke-width="1.500"/></g>
<g transform="translate(329,0)"><text x="7.500" y="7.500" text-anchor="middle" font-family="Liberation Serif,serif" font-size="13" font-weight="bold" fill="#a0a0a0">16</text><text x="7.500" y="14.500" text-anchor="middle" font-family="Liberation Sans,sans-serif" font-size="6.500" font-style="italic" fill="#a0a0a0" textLength="15" lengthAdjust="spacingAndGlyphs">(2)(2)</text></g>
<g transform="translate(362,1)" fill="#fff" stroke="#fff"><path d="M0 6.500L6.500 0 13 6.500h-2V14H4V6.500z" stroke="none"/><path d="M11 5.500h4.500M11 8.500h4.500M1 12.500h3" stroke-width="1.200" fill="none"/></g>
<g transform="translate(361,0)" fill="#a0a0a0" stroke="#a0a0a0"><path d="M0 6.500L6.500 0 13 6.500h-2V14H4V6.500z" stroke="none"/><path d="M11 5.500h4.500M11 8.500h4.500M1 12.500h3" stroke-width="1.200" fill="none"/></g>
<g transform="translate(386,1)" fill="#fff" stroke="#fff"><path d="M0 3l4-3 3 3.500 2-1.500 3 4.500h-1V14H5V9L3 6.500 2 7z" stroke="none"/><path d="M11 5.500h4M11 8.500h4M2 12.500h3" stroke-width="1.200" fill="none"/></g>
<g transform="translate(385,0)" fill="#a0a0a0" stroke="#a0a0a0"><path d="M0 3l4-3 3 3.500 2-1.500 3 4.500h-1V14H5V9L3 6.500 2 7z" stroke="none"/><path d="M11 5.500h4M11 8.500h4M2 12.500h3" stroke-width="1.200" fill="none"/></g>
<g transform="translate(406,0)"><rect x="5" y="0" width="4" height="10" fill="url(#dg)"/><path d="M10 0h4l1.500 2-1 2 1.500 2-1.500 3h-4l-1-3 1-2z" fill="#a0a0a0"/><path d="M0 5.500h6M0 7.500h6" stroke="#a0a0a0" stroke-width="1"/><text x="8" y="14.500" text-anchor="middle" font-family="Liberation Sans,sans-serif" font-size="6.500" font-style="italic" fill="#a0a0a0" textLength="15" lengthAdjust="spacingAndGlyphs">(2)(2)</text></g>
<g transform="translate(449,0)"><rect x=".8" y="0" width="13.400" height="14" rx="2" fill="#000"/><rect x="2.500" y="1.500" width="9" height="4.500" fill="#00ffff"/><rect x="2.500" y="9" width="10" height="4" rx="1" fill="#fff"/><path d="M4 10v2" stroke="#000" stroke-width="1"/><rect x="4" y="7.500" width="1" height="1" fill="#00c000"/><path d="M8.500 5.500v-2q2.500-2.500 5 0v2" fill="none" stroke="#000" stroke-width="2.600"/><rect x="7.500" y="5.500" width="7" height="4.500" fill="#ffe000" stroke="#000" stroke-width=".8"/><path d="M9 5.500v-1.500q2-2 4 0v1.500" fill="none" stroke="#ffe000" stroke-width="1.300"/><rect x="10.500" y="7" width="1" height="1.500" fill="#000"/></g>
<g transform="translate(471,0)"><rect x="4" y="0" width="11.500" height="11" rx="1.500" fill="#000"/><rect x="6.500" y="3" width="7" height="2" fill="#fff"/><rect x="6" y="6" width="6.500" height="4.500" fill="#0000d0" stroke="#fff" stroke-width=".8"/><rect x="7.500" y="7.500" width="1.500" height="1.500" fill="#00ffff"/><path d="M4 11.500h10.500l1-1.500v3l-1.500 1.500H4z" fill="#fff" stroke="#000" stroke-width="1.200"/><path d="M1.500 2.500v-1.500q2-2 4 0v1.500" fill="none" stroke="#000" stroke-width="2.600"/><rect x=".5" y="2.500" width="6" height="4" fill="#ffe000" stroke="#000" stroke-width=".8"/><path d="M2 2.500v-1.200q1.500-1.500 3 0v1.200" fill="none" stroke="#ffe000" stroke-width="1.200"/><rect x="3" y="3.800" width="1" height="1.500" fill="#000"/><path d="M2 7.500h3" stroke="#fff" stroke-width="1"/></g>
<g transform="translate(503,1)" fill="#fff" stroke="#fff"><rect x="0" y="0" width="11" height="9.500" stroke="none"/><rect x="8.500" y="4" width="7" height="10" rx="1" stroke="none"/></g>
<g transform="translate(502,0)" fill="#a0a0a0" stroke="#a0a0a0"><rect x="0" y="0" width="11" height="9.500" stroke="none"/><rect x="8.500" y="4" width="7" height="10" rx="1" stroke="none"/></g>
<path d="M503 2.500h8M503 5.500h8M503 8.500h6" stroke="#f0f0f0" stroke-width="1"/><circle cx="514" cy="11" r="2" fill="#f0f0f0" stroke="#a0a0a0" stroke-width=".8"/><path d="M512.500 9.500l3 3M515.500 9.500l-3 3" stroke="#a0a0a0" stroke-width=".8"/><rect x="512.500" y="5.500" width="3" height="2" fill="#f0f0f0"/>
<g transform="translate(534,1)"><path d="M3 8.500L.8 5.800Q0 4.500 1.200 4.500L3 6.200V2Q4 .5 5 2V1Q6-.5 7 1V1Q8-.5 9 1V2Q10 .5 11 2V8Q11 12 8.500 13.500H5.500Q3.500 11 3 8.500z" fill="#f6f6f6" stroke="#a0a0a0" stroke-width="1.100"/><path d="M5 2v4M7 1v5M9 2v4" stroke="#a0a0a0" stroke-width=".8" fill="none"/><path d="M5 8.500h3v4H5zM12.500 7l2.500 3-2.500 3z" fill="#a0a0a0"/></g>
<g transform="translate(557,1)"><path d="M3 8.500L.8 5.800Q0 4.500 1.200 4.500L3 6.200V2Q4 .5 5 2V1Q6-.5 7 1V1Q8-.5 9 1V2Q10 .5 11 2V8Q11 12 8.500 13.500H5.500Q3.500 11 3 8.500z" fill="#f6f6f6" stroke="#a0a0a0" stroke-width="1.100"/><path d="M5 2v4M7 1v5M9 2v4" stroke="#a0a0a0" stroke-width=".8" fill="none"/><path d="M4.500 7.500l4.500 5M9 7.500l-4.500 5" stroke="#a0a0a0" stroke-width="2.200"/><path d="M12.500 7l2.500 3-2.500 3z" fill="#a0a0a0"/></g>
<g transform="translate(582,2)" fill="#fff" stroke="#fff"><path d="M0 0l12.500 7L0 14z" stroke="none"/></g>
<g transform="translate(581,1)" fill="#a0a0a0" stroke="#a0a0a0"><path d="M0 0l12.500 7L0 14z" stroke="none"/></g>
<g transform="translate(605,3)" fill="#fff" stroke="#fff"><rect x="0" y="0" width="12" height="12" stroke="none"/></g>
<g transform="translate(604,2)" fill="#a0a0a0" stroke="#a0a0a0"><rect x="0" y="0" width="12" height="12" stroke="none"/></g>
<g transform="translate(628,3)" fill="#fff" stroke="#fff"><path d="M0 0h5v12H0zM6.500 0h5v12h-5z" stroke="none"/></g>
<g transform="translate(627,2)" fill="#a0a0a0" stroke="#a0a0a0"><path d="M0 0h5v12H0zM6.500 0h5v12h-5z" stroke="none"/></g>
<g transform="translate(650,2)" fill="#fff" stroke="#fff"><path d="M0 0l11 7L0 14zM11 0h3v14h-3z" stroke="none"/></g>
<g transform="translate(649,1)" fill="#a0a0a0" stroke="#a0a0a0"><path d="M0 0l11 7L0 14zM11 0h3v14h-3z" stroke="none"/></g>
<g transform="translate(673,1)" fill="#fff" stroke="#fff"><path d="M0 1l4.500 4.500L0 10zM5 1h2v9H5zM8 3h4v11.700H3V10.200h5z" stroke="none"/><path d="M12 5.500h2.500M12 8.500h2.500M1 12.500h2" stroke-width="1" fill="none"/></g>
<g transform="translate(672,0)" fill="#a0a0a0" stroke="#a0a0a0"><path d="M0 1l4.500 4.500L0 10zM5 1h2v9H5zM8 3h4v11.700H3V10.200h5z" stroke="none"/><path d="M12 5.500h2.500M12 8.500h2.500M1 12.500h2" stroke-width="1" fill="none"/></g>
<g transform="translate(696,1)" fill="#fff" stroke="#fff"><path d="M2 3h4v7.200h5V14.700H2zM7 1l4 4.500L7 10zM12 1h2v9h-2z" stroke="none"/><path d="M0 5.500h2M0 8.500h2M0 12.500h2M11 12.500h2" stroke-width="1" fill="none"/></g>
<g transform="translate(695,0)" fill="#a0a0a0" stroke="#a0a0a0"><path d="M2 3h4v7.200h5V14.700H2zM7 1l4 4.500L7 10zM12 1h2v9h-2z" stroke="none"/><path d="M0 5.500h2M0 8.500h2M0 12.500h2M11 12.500h2" stroke-width="1" fill="none"/></g>
<g transform="translate(719,3)" fill="#fff" stroke="#fff"><path d="M0 0l7 6.500L0 13zM7 0l7.500 6.500L7 13z" stroke="none"/></g>
<g transform="translate(718,2)" fill="#a0a0a0" stroke="#a0a0a0"><path d="M0 0l7 6.500L0 13zM7 0l7.500 6.500L7 13z" stroke="none"/></g>
<g transform="translate(742,3)" fill="#fff" stroke="#fff"><path d="M0 0l12 5.500V0h3v13h-3V7.500L0 13v-2.500l8-4-8-4z" stroke="none"/></g>
<g transform="translate(741,2)" fill="#a0a0a0" stroke="#a0a0a0"><path d="M0 0l12 5.500V0h3v13h-3V7.500L0 13v-2.500l8-4-8-4z" stroke="none"/></g>
<g transform="translate(784,0)"><rect x="0" y="4" width="13" height="8" rx="1" fill="#a0a0a0"/><rect x="1.500" y="5" width="10" height="5" fill="url(#dg)"/><path d="M5 12l1.500 1.500 1.500-1.500z" fill="#a0a0a0"/></g>
<g transform="translate(806,0)"><rect x="0" y="4" width="15" height="8" rx="1" fill="#a0a0a0"/><rect x="1.500" y="5" width="12" height="5" fill="url(#dg)"/><path d="M6 12l1.500 1.500 1.500-1.500z" fill="#a0a0a0"/></g>
<g transform="translate(830,0)"><rect x="0" y="4" width="13" height="8" rx="1" fill="#a0a0a0"/><rect x="1.500" y="5" width="10" height="5" fill="url(#dg)"/><path d="M5 12l1.500 1.500 1.500-1.500z" fill="#a0a0a0"/><path d="M4 1h5l-2.500 3z" fill="#a0a0a0"/></g>
<g transform="translate(853,0)"><rect x="0" y="4" width="13" height="8" rx="1" fill="#a0a0a0"/><rect x="1.500" y="5" width="10" height="5" fill="url(#dg)"/><path d="M6.5 2v3M6.5 12v2M4 14h5" stroke="#a0a0a0" stroke-width="1.200" fill="none"/></g>
<g transform="translate(876,0)"><rect x="0" y="1" width="12" height="2.500" fill="url(#dg)"/><path d="M0 3.500h12M6 3.500v9M1 8.500h11" stroke="#a0a0a0" stroke-width="1.200" fill="none"/></g>
<g transform="translate(897,0)"><rect x="2" y="1" width="12" height="2.500" fill="url(#dg)"/><path d="M2 3.500h12M8 3.500v5M0 8.500h16M2 8.500v6M13 8.500v6M0 12.500h4M11 12.500h4" stroke="#a0a0a0" stroke-width="1.200" fill="none"/></g>
<g transform="translate(920,0)"><path d="M4 0v6M13 0v6M2 2.500h4M11 2.500h4M0 6.500h16M8 6.500v5" stroke="#a0a0a0" stroke-width="1.200" fill="none"/><rect x="2" y="11" width="12" height="3" fill="url(#dg)"/><path d="M2 11h12" stroke="#a0a0a0" stroke-width="1"/></g>
<g transform="translate(943,0)"><path d="M8 0v6M6 2.500h4M0 6.500h16M4 6.500v6M12 6.500v6M0 9.500h16" stroke="#a0a0a0" stroke-width="1.200" fill="none"/><rect x="0" y="12" width="6.500" height="3" fill="url(#dg)"/><rect x="9" y="12" width="6.500" height="3" fill="url(#dg)"/></g>
<g transform="translate(966,0)"><rect x="0" y="0" width="6.500" height="3" fill="url(#dg)"/><rect x="9" y="0" width="6.500" height="3" fill="url(#dg)"/><path d="M3.500 3v3M12.500 3v3M0 6.500h16M0 8.500h16M8 8.500v6M5 12.500h6" stroke="#a0a0a0" stroke-width="1.200" fill="none"/></g>
<path d="M1001.500 2v5.500h8" fill="none" stroke="#a0a0a0" stroke-width="1.200"/>
<g transform="translate(15,31)" fill="#fff" stroke="#fff"><path d="M2 2.500h3.500M7.500 2.500h7.500M2 10.500h3.500M7.500 10.500h7.500M2 12.500h3.500M7.500 12.500h2" fill="none" stroke-width="1"/><path d="M7.500 5h7.500M7.500 8h5.500" fill="none" stroke-width="2"/><path d="M7.500 0v16" fill="none" stroke-width="1" stroke-dasharray="1 1.500"/><path d="M0 6.500h5M3 4.500l-2.500 2 2.500 2" fill="none" stroke-width="1.200"/></g>
<g transform="translate(14,30)" fill="#a0a0a0" stroke="#a0a0a0"><path d="M2 2.500h3.500M7.500 2.500h7.500M2 10.500h3.500M7.500 10.500h7.500M2 12.500h3.500M7.500 12.500h2" fill="none" stroke-width="1"/><path d="M7.500 5h7.500M7.500 8h5.500" fill="none" stroke-width="2"/><path d="M7.500 0v16" fill="none" stroke-width="1" stroke-dasharray="1 1.500"/><path d="M0 6.500h5M3 4.500l-2.500 2 2.500 2" fill="none" stroke-width="1.200"/></g>
<g transform="translate(38,31)" fill="#fff" stroke="#fff"><path d="M2 2.500h3.500M7.500 2.500h7.500M2 10.500h3.500M7.500 10.500h7.500M2 12.500h3.500M7.500 12.500h2" fill="none" stroke-width="1"/><path d="M7.500 5h7.500M7.500 8h5.500" fill="none" stroke-width="2"/><path d="M7.500 0v16" fill="none" stroke-width="1" stroke-dasharray="1 1.500"/><path d="M0 6.500h5M2.500 4.500l2.500 2-2.500 2" fill="none" stroke-width="1.200"/></g>
<g transform="translate(37,30)" fill="#a0a0a0" stroke="#a0a0a0"><path d="M2 2.500h3.500M7.500 2.500h7.500M2 10.500h3.500M7.500 10.500h7.500M2 12.500h3.500M7.500 12.500h2" fill="none" stroke-width="1"/><path d="M7.500 5h7.500M7.500 8h5.500" fill="none" stroke-width="2"/><path d="M7.500 0v16" fill="none" stroke-width="1" stroke-dasharray="1 1.500"/><path d="M0 6.500h5M2.500 4.500l2.500 2-2.500 2" fill="none" stroke-width="1.200"/></g>
<g transform="translate(69,31)" fill="#fff" stroke="#fff"><path d="M0 .5h13M3 3.500h10M3 6.500h10M3 9.500h10M2 12.500h11" fill="none" stroke-width="1.200"/></g>
<g transform="translate(68,30)" fill="#a0a0a0" stroke="#a0a0a0"><path d="M0 .5h13M3 3.500h10M3 6.500h10M3 9.500h10M2 12.500h11" fill="none" stroke-width="1.200"/></g>
<g transform="translate(92,30)" fill="#fff" stroke="#fff"><path d="M2 2l2 3.500M2 2l3.500-.5M2.500 3.500q2-3.500 6-2.500 2.500 1.500 0 4.500h-5" fill="none" stroke-width="1.200"/><path d="M3 8.500h10M5 11.500h8M3 14.500h10" fill="none" stroke-width="1.200"/></g>
<g transform="translate(91,29)" fill="#a0a0a0" stroke="#a0a0a0"><path d="M2 2l2 3.500M2 2l3.500-.5M2.500 3.500q2-3.500 6-2.500 2.500 1.500 0 4.500h-5" fill="none" stroke-width="1.200"/><path d="M3 8.500h10M5 11.500h8M3 14.500h10" fill="none" stroke-width="1.200"/></g>
<g transform="translate(123,31)" fill="#fff" stroke="#fff"><path d="M0 14.500L12 2" fill="none" stroke-width="1.300"/><path d="M7 8l4.500-3.500 3.500 3.500v4l-3 1.500z" stroke="none"/></g>
<g transform="translate(122,30)" fill="#a0a0a0" stroke="#a0a0a0"><path d="M0 14.500L12 2" fill="none" stroke-width="1.300"/><path d="M7 8l4.500-3.500 3.500 3.500v4l-3 1.500z" stroke="none"/></g>
<g transform="translate(146,31)" fill="#fff" stroke="#fff"><path d="M0 14.500L12 2" fill="none" stroke-width="1.300"/><path d="M7 8l4.500-3.500 3.500 3.500v4l-3 1.500z" stroke="none"/><path d="M1 3l1-3M1 3l3.500.5M1.500 2.500q3-3.500 7-1.500" fill="none" stroke-width="1.200"/></g>
<g transform="translate(145,30)" fill="#a0a0a0" stroke="#a0a0a0"><path d="M0 14.500L12 2" fill="none" stroke-width="1.300"/><path d="M7 8l4.500-3.500 3.500 3.500v4l-3 1.500z" stroke="none"/><path d="M1 3l1-3M1 3l3.500.5M1.500 2.500q3-3.500 7-1.500" fill="none" stroke-width="1.200"/></g>
<g transform="translate(169,31)" fill="#fff" stroke="#fff"><path d="M0 14.500L12 2" fill="none" stroke-width="1.300"/><path d="M7 8l4.500-3.500 3.500 3.500v4l-3 1.500z" stroke="none"/><path d="M9 3.500l1.500-3M9 3.500l-3.500-.5M8.500 2.500q-3-3.500-7-0" fill="none" stroke-width="1.200"/></g>
<g transform="translate(168,30)" fill="#a0a0a0" stroke="#a0a0a0"><path d="M0 14.500L12 2" fill="none" stroke-width="1.300"/><path d="M7 8l4.500-3.500 3.500 3.500v4l-3 1.500z" stroke="none"/><path d="M9 3.500l1.500-3M9 3.500l-3.500-.5M8.500 2.500q-3-3.500-7-0" fill="none" stroke-width="1.200"/></g>
<g transform="translate(192,31)" fill="#fff" stroke="#fff"><path d="M0 14.500L12 2" fill="none" stroke-width="1.300"/><path d="M7 8l4.500-3.500 3.500 3.500v4l-3 1.500z" stroke="none"/><path d="M2 2l10 9" fill="none" stroke-width="1.300"/></g>
<g transform="translate(191,30)" fill="#a0a0a0" stroke="#a0a0a0"><path d="M0 14.500L12 2" fill="none" stroke-width="1.300"/><path d="M7 8l4.500-3.500 3.500 3.500v4l-3 1.500z" stroke="none"/><path d="M2 2l10 9" fill="none" stroke-width="1.300"/></g>
</svg>
</div>
</body></html>
